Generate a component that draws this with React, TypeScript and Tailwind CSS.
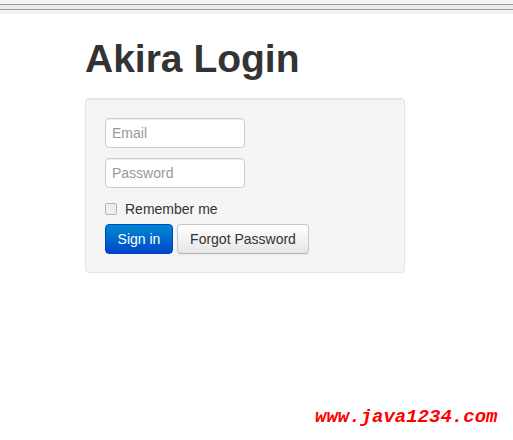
import React from "react";

export default function App() {
  return (
    <div className="relative w-[513px] h-[440px] bg-white overflow-hidden" style={{ fontFamily: '"Liberation Sans", Arial, sans-serif' }}>
      <div className="h-[14px] bg-[#f3f3f3] flex flex-col">
        <div className="h-[4px]" />
        <div className="h-[1px] bg-[#9a9a9a]" />
        <div className="h-[4px] bg-[#ececec]" />
        <div className="h-[1px] bg-[#9a9a9a]" />
      </div>
      <div className="pl-[85px] pt-[23px]">
        <h1 className="text-[39px] leading-[44px] font-bold text-[#333] m-0">Akira Login</h1>
        <div className="mt-[17px] w-[320px] h-[175px] bg-[#f5f5f5] border border-[#e3e3e3] rounded-[4px] pl-[19px] pt-[19px] shadow-[inset_0_1px_1px_rgba(0,0,0,0.05)]">
          <input
            className="block w-[140px] h-[30px] px-[6px] text-[14px] bg-white border border-[#ccc] rounded-[4px] shadow-[inset_0_1px_1px_rgba(0,0,0,0.075)] placeholder:text-[#999] outline-none"
            placeholder="Email"
          />
          <input
            className="block mt-[10px] w-[140px] h-[30px] px-[6px] text-[14px] bg-white border border-[#ccc] rounded-[4px] shadow-[inset_0_1px_1px_rgba(0,0,0,0.075)] placeholder:text-[#999] outline-none"
            placeholder="Password"
          />
          <div className="mt-[14px] flex items-center h-[14px]">
            <div className="w-[12px] h-[12px] border border-[#b5b5b5] bg-[#eee] rounded-[2px]" />
            <span className="ml-[8px] text-[14px] text-[#333]">Remember me</span>
          </div>
          <div className="mt-[8px] flex gap-[4px]">
            <button className="w-[68px] h-[30px] text-[14px] text-white rounded-[4px] border border-[#0044cc] bg-gradient-to-b from-[#0088cc] to-[#0044cc]">
              Sign in
            </button>
            <button className="w-[132px] h-[30px] text-[14px] text-[#333] rounded-[4px] border border-[#c8c8c8] border-b-[#b3b3b3] bg-gradient-to-b from-white to-[#e6e6e6] shadow-[0_1px_2px_rgba(0,0,0,0.05)]">
              Forgot Password
            </button>
          </div>
        </div>
      </div>
      <div
        className="absolute left-[315px] top-[406px] text-[19px] font-bold italic text-[#f00] leading-[22px]"
        style={{ fontFamily: '"Liberation Mono", "Courier New", monospace' }}
      >
        www.java1234.com
      </div>
    </div>
  );
}
